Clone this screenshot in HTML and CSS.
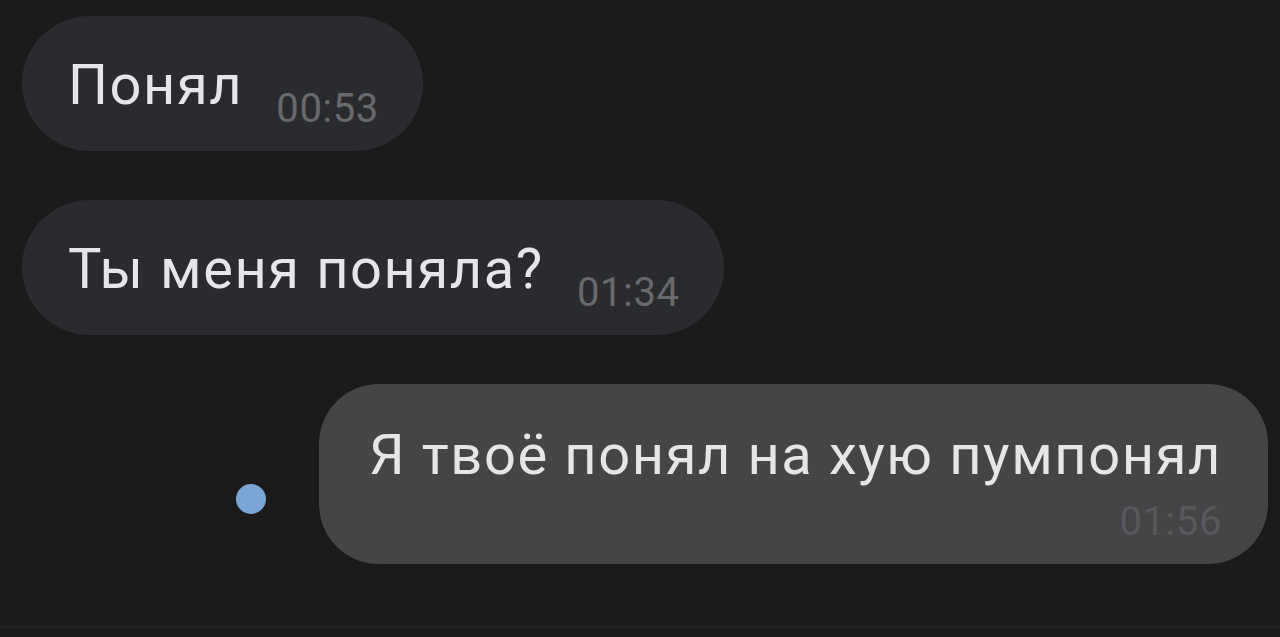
FILE: index.html
```html
<!DOCTYPE html>
<html lang="ru">

<head>
  <meta charset="UTF-8">
  <meta name="viewport" content="width=device-width, initial-scale=1.0">
  <title>Чат</title>
  <link rel="stylesheet" href="styles.css">
</head>

<body>
  <div class="chat">
    <div class="row in">
      <div class="bubble">
        <span class="text">Понял</span>
        <span class="time">00:53</span>
      </div>
    </div>

    <div class="row in">
      <div class="bubble">
        <span class="text">Ты меня поняла?</span>
        <span class="time">01:34</span>
      </div>
    </div>

    <div class="row out">
      <span class="unread"></span>
      <div class="bubble wide">
        <span class="text">Я твоё понял на хую пумпонял</span>
        <span class="time">01:56</span>
      </div>
    </div>
  </div>

  <div class="composer-line"></div>
</body>

</html>
```

FILE: styles.css
```css
body {
  margin: 0;
  background-color: #1a1a1a;
  font-family: Roboto, "Noto Sans", sans-serif;
  height: 637px;
  overflow: hidden;
  display: flex;
  flex-direction: column;
}

.chat {
  flex: 1;
  display: flex;
  flex-direction: column;
  gap: 49px;
  padding: 16px 12px 0 22px;
}

.row {
  display: flex;
  align-items: flex-end;
}

.row.out {
  justify-content: flex-end;
}

.bubble {
  background-color: #2a2b2e;
  border-radius: 68px;
  height: 135px;
  padding: 41px 44px 0 46px;
  box-sizing: border-box;
  display: flex;
  align-items: flex-start;
  gap: 33px;
}

.text {
  color: #e6e6e8;
  font-size: 56px;
  line-height: 56px;
  letter-spacing: 1.6px;
  white-space: nowrap;
}

.time {
  color: #69696c;
  font-size: 40px;
  line-height: 40px;
  letter-spacing: 0.6px;
  margin-top: 32px;
}

.bubble.wide {
  background-color: #454547;
  height: 180px;
  border-radius: 60px;
  padding: 43px 46px 22px 50px;
  flex-direction: column;
  align-items: flex-end;
  gap: 19px;
}

.bubble.wide .time {
  color: #59595c;
  margin-top: 0;
}

.unread {
  width: 30px;
  height: 30px;
  border-radius: 50%;
  background-color: #7ba4d6;
  margin: 0 53px 50px 0;
}

.composer-line {
  height: 3px;
  background-color: #222222;
  margin-bottom: 9px;
}
```
